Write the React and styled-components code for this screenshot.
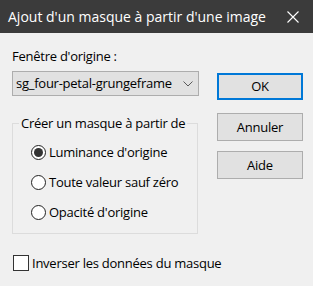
import React from 'react';
import styled, { createGlobalStyle } from 'styled-components';

const Global = createGlobalStyle`
  html, body { margin: 0; padding: 0; background: #f0f0f0; }
  #root { width: 313px; height: 286px; }
`;

const Window = styled.div`
  width: 313px;
  height: 286px;
  background: #f0f0f0;
  display: flex;
  flex-direction: column;
  overflow: hidden;
  font-family: "Open Sans", "Noto Sans", sans-serif;
  font-size: 13px;
  letter-spacing: -0.25px;
  line-height: 19px;
  color: #000;
  white-space: nowrap;
`;

const TitleBar = styled.div`
  height: 33px;
  flex: none;
  box-sizing: border-box;
  background: #3b3b3b;
  color: #fff;
  display: flex;
  align-items: center;
  justify-content: space-between;
  padding: 0 14px 0 8px;
  font-size: 14px;
  letter-spacing: 0;
`;

const CloseIcon = () => (
  <svg width="12" height="12" viewBox="0 0 12 12">
    <path d="M0.5 0.5 L11.5 11.5 M11.5 0.5 L0.5 11.5" stroke="#fff" strokeWidth="1.1" fill="none" />
  </svg>
);

const Content = styled.div`
  display: flex;
  padding: 0 10px 0 12px;
`;

const LeftCol = styled.div`
  width: 188px;
  display: flex;
  flex-direction: column;
`;

const RightCol = styled.div`
  margin-left: auto;
  width: 86px;
  display: flex;
  flex-direction: column;
`;

const FieldLabel = styled.div`
  margin-top: 14px;
`;

const Combo = styled.div`
  margin-top: 5px;
  width: 187px;
  height: 25px;
  box-sizing: border-box;
  border: 1px solid #adadad;
  background: #e1e1e1;
  display: flex;
  align-items: center;
  justify-content: space-between;
  padding: 0 5px 0 3px;
  line-height: 23px;
`;

const Chevron = () => (
  <svg width="10" height="6" viewBox="0 0 10 6">
    <path d="M0.5 0.5 L5 5 L9.5 0.5" stroke="#5a5a5a" strokeWidth="1" fill="none" />
  </svg>
);

const Group = styled.fieldset`
  margin: 18px 0 0 0;
  width: 186px;
  box-sizing: border-box;
  border: 1px solid #dcdcdc;
  padding: 9px 0 11px 6px;
  display: flex;
  flex-direction: column;
  gap: 10px;
`;

const Legend = styled.legend`
  margin: 0;
  padding: 0 2px;
  line-height: 19px;
`;

const OptionRow = styled.label`
  display: flex;
  align-items: center;
  height: 20px;
  gap: 3px;
  padding-left: 12px;
`;

const RadioMark = styled.span`
  width: 15px;
  height: 15px;
  box-sizing: border-box;
  border-radius: 50%;
  border: 1px solid #222;
  background: #fff;
  display: flex;
  align-items: center;
  justify-content: center;
  flex: none;
  &::after {
    content: "";
    width: 9px;
    height: 9px;
    border-radius: 50%;
    background: ${p => (p.$checked ? '#333' : 'transparent')};
  }
`;

const CheckRow = styled.label`
  display: flex;
  align-items: center;
  height: 20px;
  gap: 3px;
  margin: 19px 0 0 13px;
`;

const CheckBox = styled.span`
  width: 16px;
  height: 16px;
  box-sizing: border-box;
  border: 1px solid #333;
  background: #fff;
  flex: none;
`;

const Button = styled.div`
  margin-top: ${p => p.$top}px;
  height: ${p => (p.$primary ? 27 : 28)}px;
  box-sizing: border-box;
  border: ${p => (p.$primary ? '2px solid #0078d7' : '1px solid #adadad')};
  background: #e1e1e1;
  display: flex;
  align-items: center;
  justify-content: center;
`;

const Radio = ({ checked, children }) => (
  <OptionRow>
    <RadioMark $checked={checked} />
    {children}
  </OptionRow>
);

export default function App() {
  return (
    <>
      <Global />
      <Window>
        <TitleBar>
          <span>Ajout d'un masque à partir d'une image</span>
          <CloseIcon />
        </TitleBar>
        <Content>
          <LeftCol>
            <FieldLabel>Fenêtre d'origine :</FieldLabel>
            <Combo>
              <span>sg_four-petal-grungeframe</span>
              <Chevron />
            </Combo>
            <Group>
              <Legend>Créer un masque à partir de</Legend>
              <Radio checked>Luminance d'origine</Radio>
              <Radio>Toute valeur sauf zéro</Radio>
              <Radio>Opacité d'origine</Radio>
            </Group>
          </LeftCol>
          <RightCol>
            <Button $primary $top={40}>OK</Button>
            <Button $top={13}>Annuler</Button>
            <Button $top={10}>Aide</Button>
          </RightCol>
        </Content>
        <CheckRow>
          <CheckBox />
          Inverser les données du masque
        </CheckRow>
      </Window>
    </>
  );
}
